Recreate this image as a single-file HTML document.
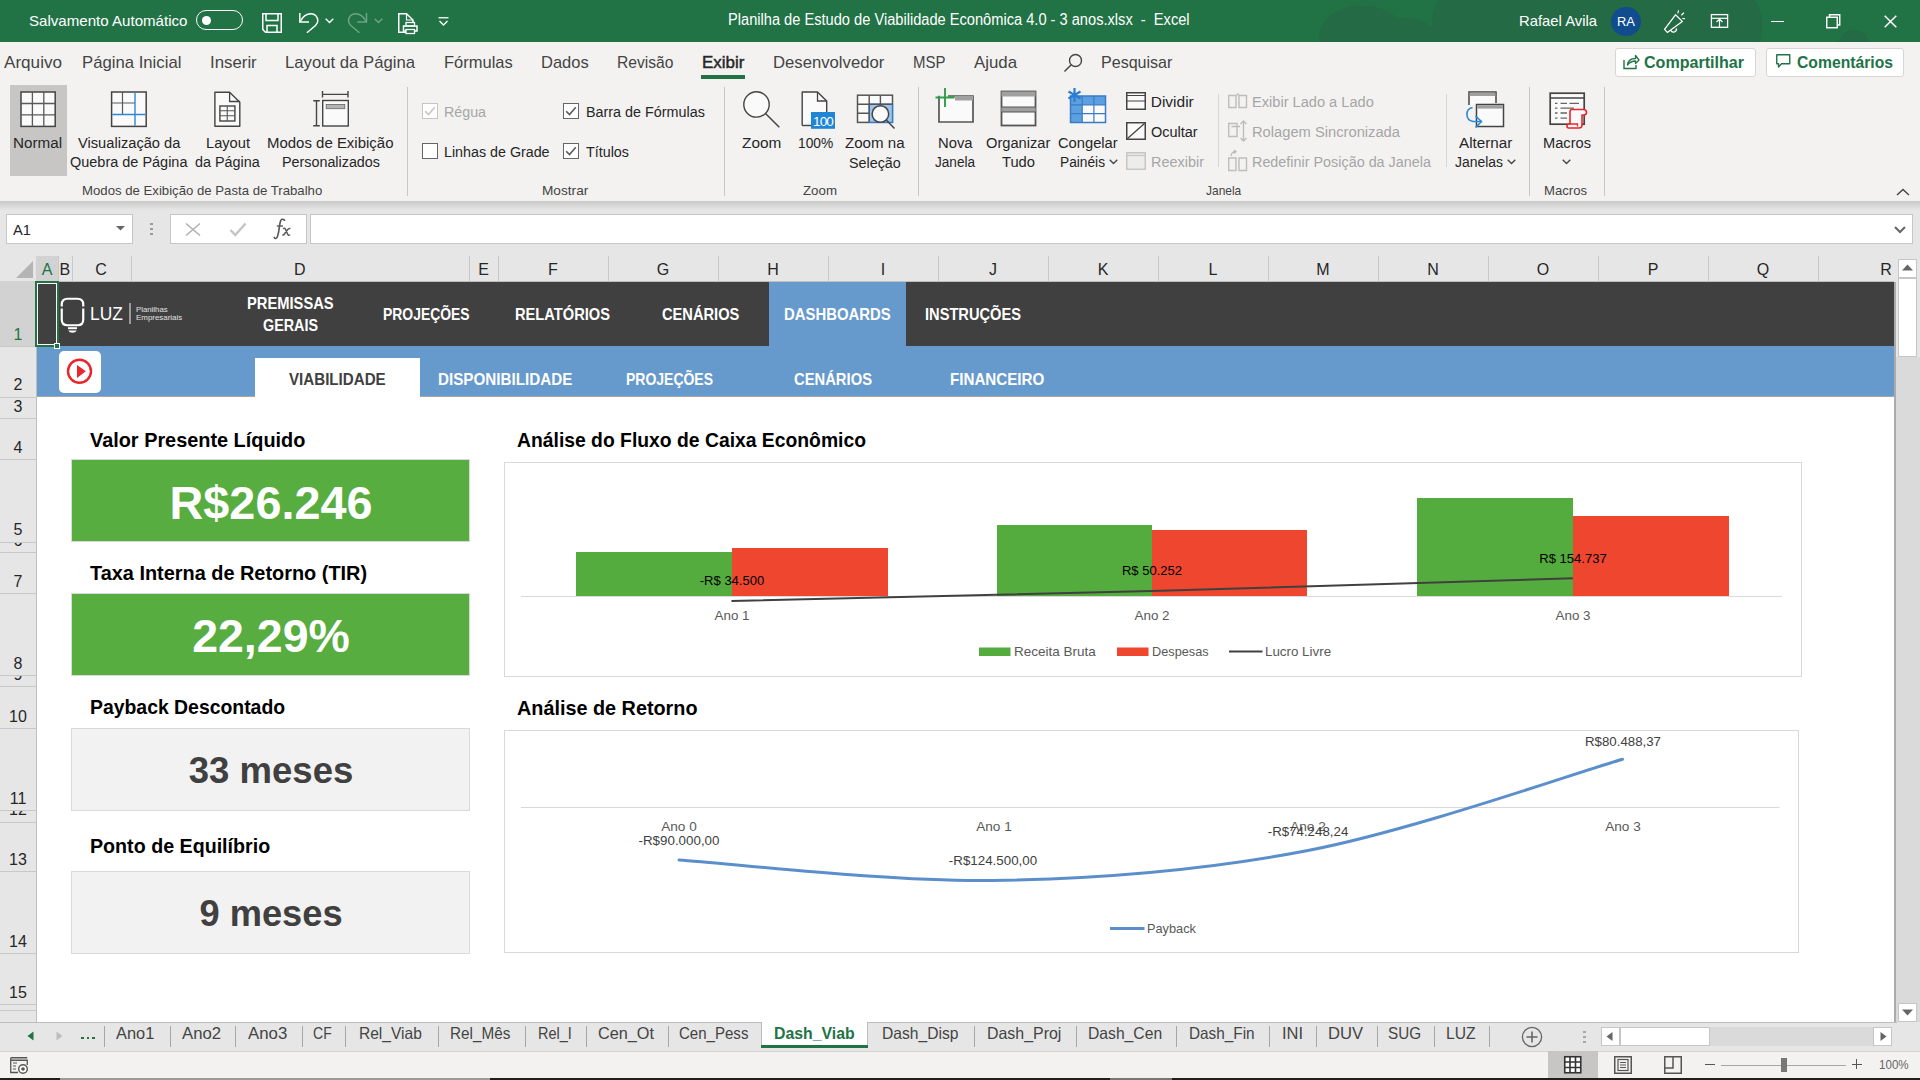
<!DOCTYPE html><html><head><meta charset="utf-8"><style>
*{margin:0;padding:0;box-sizing:border-box}
html,body{width:1920px;height:1080px;overflow:hidden;background:#fff;font-family:"Liberation Sans",sans-serif;position:relative}
.t{position:absolute;white-space:nowrap;line-height:1}
.r{position:absolute;display:block;overflow:visible}
</style></head><body>

<div class="r" style="left:0px;top:0px;width:1920px;height:42px;background:#217346;"></div>
<div class="r" style="left:0;top:0;width:1920px;height:42px;overflow:hidden"><div class="r" style="left:1319px;top:6px;width:86px;height:70px;border-radius:45%;background:#246a45"></div><div class="r" style="left:1370px;top:18px;width:70px;height:50px;border-radius:50%;background:#246a45"></div><div class="r" style="left:1432px;top:-10px;width:330px;height:70px;border-radius:30px;background:#246a45"></div><div class="r" style="left:1838px;top:30px;width:32px;height:30px;border-radius:50%;background:#246a45"></div></div>
<div class="t" style="left:28.50px;top:12.90px;font-size:15px;color:#fff;transform:scaleX(1.0057);transform-origin:0 0;">Salvamento Automático</div>
<div class="r" style="left:196px;top:10px;width:47px;height:20px;border:1.5px solid #fff;border-radius:10px"></div>
<div class="r" style="left:201.5px;top:15.5px;width:9px;height:9px;background:#fff;border-radius:50%"></div>
<svg class="r" style="left:262px;top:13px;" width="20" height="20" viewBox="0 0 20 20"><path d="M0.75 0.75H19.25V19.25H3.5L0.75 16.5Z M4 0.75V7.5H16V0.75 M5 19.25V12.5H15V19.25" fill="none" stroke="#fff" stroke-width="1.5"/></svg>
<svg class="r" style="left:298px;top:12px;" width="22" height="22" viewBox="0 0 22 22"><path d="M1.8 1.1V9.9H11" fill="none" stroke="#fff" stroke-width="1.5"/><path d="M2.5 9C5 4 8.5 1.7 13 1.7C17 1.7 19.8 5 19.8 8.8C19.8 10.5 19 12 17.5 13.5L8.9 20.8" fill="none" stroke="#fff" stroke-width="1.5"/></svg>
<svg class="r" style="left:325px;top:18px;" width="9" height="6" viewBox="0 0 9 6"><path d="M0.7 0.7L4.5 4.5L8.3 0.7" fill="none" stroke="#fff" stroke-width="1.4"/></svg>
<svg class="r" style="left:348px;top:12px;" width="22" height="22" viewBox="0 0 22 22"><path d="M18.5 1.1V9.9H9.3" fill="none" stroke="#6ea383" stroke-width="1.5"/><path d="M17.8 9C15.3 4 11.8 1.7 7.3 1.7C3.3 1.7 0.5 5 0.5 8.8C0.5 10.5 1.3 12 2.8 13.5L11.4 20.8" fill="none" stroke="#6ea383" stroke-width="1.5"/></svg>
<svg class="r" style="left:374px;top:18px;" width="9" height="6" viewBox="0 0 9 6"><path d="M0.7 0.7L4.5 4.5L8.3 0.7" fill="none" stroke="#6ea383" stroke-width="1.4"/></svg>
<svg class="r" style="left:398px;top:13px;" width="20" height="21" viewBox="0 0 20 21"><path d="M8 19.25H0.75V0.75H8.5L15 7V9" fill="none" stroke="#fff" stroke-width="1.5"/><path d="M8.5 0.75V7H15" fill="none" stroke="#fff" stroke-width="1.2"/><rect x="5.5" y="13" width="13.5" height="5" fill="none" stroke="#fff" stroke-width="1.5"/><rect x="8" y="9.5" width="8.5" height="3.5" fill="none" stroke="#fff" stroke-width="1.3"/><rect x="8" y="16.5" width="8.5" height="4" fill="#217346" stroke="#fff" stroke-width="1.3"/></svg>
<svg class="r" style="left:438px;top:17px;" width="11" height="10" viewBox="0 0 11 10"><path d="M0.5 0.75H10.5" stroke="#fff" stroke-width="1.3"/><path d="M1.5 4L5.5 8L9.5 4" fill="none" stroke="#fff" stroke-width="1.3"/></svg>
<div class="t" style="left:728.00px;top:11.86px;font-size:16px;color:#fff;transform:scaleX(0.9143);transform-origin:0 0;">Planilha de Estudo de Viabilidade Econômica 4.0 - 3 anos.xlsx&nbsp; -&nbsp; Excel</div>
<div class="t" style="left:1519.00px;top:13.30px;font-size:15px;color:#fff;transform:scaleX(0.9881);transform-origin:0 0;">Rafael Avila</div>
<div class="r" style="left:1611px;top:6.5px;width:29.5px;height:29.5px;border-radius:50%;background:#114d8e"></div>
<div class="t" style="left:1625.80px;top:15.84px;font-size:12px;color:#fff;transform:scaleX(1.0797) translateX(-50%);transform-origin:0 0;">RA</div>
<svg class="r" style="left:1660px;top:8px;" width="28" height="28" viewBox="0 0 28 28"><path d="M4.5 21.4L15.5 6.8L22.3 13.4L7.3 24.4Z" fill="none" stroke="#fff" stroke-width="1.3" stroke-linejoin="round"/><path d="M10.8 22.4A3 3 0 0 0 16.4 20.4" fill="none" stroke="#fff" stroke-width="1.3"/><path d="M17.8 5.3L18.6 2.3M21.3 7.3L24 4.8M22.3 10.5L25 10.7" stroke="#fff" stroke-width="1.2"/></svg>
<svg class="r" style="left:1710px;top:14px;" width="19" height="14" viewBox="0 0 19 14"><rect x="1.4" y="0.6" width="16.2" height="12.7" fill="none" stroke="#fff" stroke-width="1.3"/><path d="M1.4 4.3H17.6" stroke="#fff" stroke-width="1.2"/><path d="M9.5 13V5M6.5 8L9.5 5L12.5 8" fill="none" stroke="#fff" stroke-width="1.2"/></svg>
<div class="r" style="left:1771px;top:20.5px;width:13px;height:1.5px;background:#fff;"></div>
<svg class="r" style="left:1826px;top:14px;" width="15" height="15" viewBox="0 0 15 15"><rect x="0.75" y="3.25" width="10.5" height="10.5" fill="none" stroke="#fff" stroke-width="1.4"/><path d="M3.5 3V0.75H13.75V11H11.5" fill="none" stroke="#fff" stroke-width="1.4"/></svg>
<svg class="r" style="left:1884px;top:15px;" width="13" height="13" viewBox="0 0 13 13"><path d="M0.7 0.7L12.3 12.3M12.3 0.7L0.7 12.3" stroke="#fff" stroke-width="1.5"/></svg>
<div class="r" style="left:0px;top:42px;width:1920px;height:159px;background:#f3f2f1;"></div>
<div class="t" style="left:4.30px;top:54.11px;font-size:17px;color:#444444;transform:scaleX(1.0062);transform-origin:0 0;">Arquivo</div>
<div class="t" style="left:82.30px;top:54.11px;font-size:17px;color:#444444;transform:scaleX(0.9829);transform-origin:0 0;">Página Inicial</div>
<div class="t" style="left:210.00px;top:54.11px;font-size:17px;color:#444444;transform:scaleX(0.9890);transform-origin:0 0;">Inserir</div>
<div class="t" style="left:285.00px;top:54.11px;font-size:17px;color:#444444;transform:scaleX(0.9825);transform-origin:0 0;">Layout da Página</div>
<div class="t" style="left:444.00px;top:54.11px;font-size:17px;color:#444444;transform:scaleX(0.9697);transform-origin:0 0;">Fórmulas</div>
<div class="t" style="left:541.00px;top:54.11px;font-size:17px;color:#444444;transform:scaleX(0.9707);transform-origin:0 0;">Dados</div>
<div class="t" style="left:617.00px;top:54.11px;font-size:17px;color:#444444;transform:scaleX(0.9182);transform-origin:0 0;">Revisão</div>
<div class="t" style="left:772.50px;top:54.11px;font-size:17px;color:#444444;transform:scaleX(0.9816);transform-origin:0 0;">Desenvolvedor</div>
<div class="t" style="left:912.50px;top:54.11px;font-size:17px;color:#444444;transform:scaleX(0.8821);transform-origin:0 0;">MSP</div>
<div class="t" style="left:974.00px;top:54.11px;font-size:17px;color:#444444;transform:scaleX(0.9889);transform-origin:0 0;">Ajuda</div>
<div class="t" style="left:702.00px;top:54.11px;font-size:17px;color:#262626;transform:scaleX(0.9973);transform-origin:0 0;-webkit-text-stroke:0.45px #262626;">Exibir</div>
<div class="r" style="left:701px;top:75px;width:44px;height:4px;background:#217346;"></div>
<svg class="r" style="left:1063px;top:53px;" width="20" height="20" viewBox="0 0 20 20"><circle cx="12.5" cy="7.5" r="6" fill="none" stroke="#444" stroke-width="1.4"/><path d="M8.2 11.8L1.5 18.5" stroke="#444" stroke-width="1.5"/></svg>
<div class="t" style="left:1100.60px;top:54.11px;font-size:17px;color:#444444;transform:scaleX(0.9445);transform-origin:0 0;">Pesquisar</div>
<div class="r" style="left:1614.5px;top:47.5px;width:141px;height:29px;background:#fff;border:1px solid #d6d6d6;border-radius:3px"></div>
<svg class="r" style="left:1623px;top:53px;" width="17" height="17" viewBox="0 0 17 17"><path d="M1 7V15.5H13V12" fill="none" stroke="#217346" stroke-width="1.4"/><path d="M4.5 12C5 7.5 8 5.5 12.5 5.5V2.5L16 7L12.5 10.5V8C9 8 6.5 9.5 4.5 12Z" fill="none" stroke="#217346" stroke-width="1.3" stroke-linejoin="round"/></svg>
<div class="t" style="left:1644.00px;top:53.81px;font-size:17px;color:#217346;font-weight:bold;transform:scaleX(0.9453);transform-origin:0 0;">Compartilhar</div>
<div class="r" style="left:1766px;top:47.5px;width:138px;height:29px;background:#fff;border:1px solid #d6d6d6;border-radius:3px"></div>
<svg class="r" style="left:1776px;top:54px;" width="15" height="15" viewBox="0 0 15 15"><path d="M0.75 0.75H13.75V9.75H5.5L2.5 13V9.75H0.75Z" fill="none" stroke="#217346" stroke-width="1.4" stroke-linejoin="round"/></svg>
<div class="t" style="left:1796.70px;top:53.81px;font-size:17px;color:#217346;font-weight:bold;transform:scaleX(0.9239);transform-origin:0 0;">Comentários</div>
<div class="r" style="left:10px;top:85px;width:57px;height:91px;background:#c8c6c4;"></div>
<svg class="r" style="left:19px;top:90px;" width="38" height="38" viewBox="0 0 38 38"><rect x="2" y="2" width="34.2" height="34.4" fill="#fafafa" stroke="#444" stroke-width="1.5"/><path d="M13.4 2V36.4M24.8 2V36.4M2 13.5H36.2M2 24.9H36.2" stroke="#5a5a5a" stroke-width="1.3"/></svg>
<div class="t" style="left:13.00px;top:134.68px;font-size:15.5px;color:#262626;transform:scaleX(0.9812);transform-origin:0 0;">Normal</div>
<svg class="r" style="left:110px;top:90px;" width="38" height="38" viewBox="0 0 38 38"><rect x="1.6" y="2" width="34.6" height="34.4" fill="#fafafa" stroke="#444" stroke-width="1.5"/><path d="M12.5 2V24.5M1.6 13H25" stroke="#5a5a5a" stroke-width="1.2"/><path d="M2.3 24.5H35.5M25 2.7V35.7" stroke="#2b88d8" stroke-width="1.4"/></svg>
<div class="t" style="left:78.30px;top:134.68px;font-size:15.5px;color:#262626;transform:scaleX(0.9454);transform-origin:0 0;">Visualização da</div>
<div class="t" style="left:70.00px;top:154.38px;font-size:15.5px;color:#262626;transform:scaleX(0.9335);transform-origin:0 0;">Quebra de Página</div>
<svg class="r" style="left:210px;top:88px;" width="34" height="42" viewBox="0 0 34 42"><path d="M4.9 38.3V4.3H19.6L29.8 14.2V38.3Z" fill="#fafafa" stroke="#444" stroke-width="1.4" stroke-linejoin="round"/><path d="M19.6 4.3V13.5H29.8" fill="none" stroke="#444" stroke-width="1.3"/><rect x="9.9" y="18" width="15" height="15" fill="#fafafa" stroke="#444" stroke-width="1.4"/><path d="M9.9 22.7H24.9M9.9 27.7H24.9M17.25 18V33" stroke="#555" stroke-width="1.1"/></svg>
<div class="t" style="left:206.00px;top:134.68px;font-size:15.5px;color:#262626;transform:scaleX(0.9450);transform-origin:0 0;">Layout</div>
<div class="t" style="left:195.00px;top:154.38px;font-size:15.5px;color:#262626;transform:scaleX(0.9264);transform-origin:0 0;">da Página</div>
<svg class="r" style="left:310px;top:88px;" width="42" height="42" viewBox="0 0 42 42"><path d="M6.5 12.7V37.7M3.2 12.7H9.8M3.2 37.7H9.8" stroke="#444" stroke-width="1.4"/><path d="M12.5 3V9.5M38 3V9.5M12.5 6.4H38" stroke="#444" stroke-width="1.4"/><rect x="12.7" y="12.5" width="25.6" height="25.5" fill="#fafafa" stroke="#444" stroke-width="1.4"/><rect x="16.2" y="16.4" width="18.6" height="4.3" fill="#b4b4b4" stroke="#666" stroke-width="0.8"/></svg>
<div class="t" style="left:267.30px;top:134.68px;font-size:15.5px;color:#262626;transform:scaleX(0.9656);transform-origin:0 0;">Modos de Exibição</div>
<div class="t" style="left:282.00px;top:154.38px;font-size:15.5px;color:#262626;transform:scaleX(0.9245);transform-origin:0 0;">Personalizados</div>
<div class="t" style="left:82.30px;top:184.07px;font-size:13.5px;color:#444;transform:scaleX(0.9761);transform-origin:0 0;">Modos de Exibição de Pasta de Trabalho</div>
<div class="r" style="left:407px;top:86.5px;width:1px;height:109px;background:#c8c6c4;"></div>
<svg class="r" style="left:422px;top:102.8px;" width="16" height="16" viewBox="0 0 16 16"><rect x="0.5" y="0.5" width="15" height="15" fill="#fff" stroke="#c8c6c4" stroke-width="1"/><path d="M3.2 8.2L6.5 11.6L12.8 4.3" fill="none" stroke="#c8c6c4" stroke-width="1.6"/></svg>
<div class="t" style="left:444.00px;top:104.28px;font-size:15.5px;color:#a6a6a6;transform:scaleX(0.9193);transform-origin:0 0;">Régua</div>
<svg class="r" style="left:422px;top:142.8px;" width="16" height="16" viewBox="0 0 16 16"><rect x="0.5" y="0.5" width="15" height="15" fill="#fff" stroke="#666" stroke-width="1"/></svg>
<div class="t" style="left:444.00px;top:143.58px;font-size:15.5px;color:#262626;transform:scaleX(0.9210);transform-origin:0 0;">Linhas de Grade</div>
<svg class="r" style="left:563px;top:102.8px;" width="16" height="16" viewBox="0 0 16 16"><rect x="0.5" y="0.5" width="15" height="15" fill="#fff" stroke="#666" stroke-width="1"/><path d="M3.2 8.2L6.5 11.6L12.8 4.3" fill="none" stroke="#5a5a5a" stroke-width="1.6"/></svg>
<div class="t" style="left:586.00px;top:104.28px;font-size:15.5px;color:#262626;transform:scaleX(0.9262);transform-origin:0 0;">Barra de Fórmulas</div>
<svg class="r" style="left:563px;top:142.8px;" width="16" height="16" viewBox="0 0 16 16"><rect x="0.5" y="0.5" width="15" height="15" fill="#fff" stroke="#666" stroke-width="1"/><path d="M3.2 8.2L6.5 11.6L12.8 4.3" fill="none" stroke="#5a5a5a" stroke-width="1.6"/></svg>
<div class="t" style="left:586.00px;top:143.58px;font-size:15.5px;color:#262626;transform:scaleX(0.9241);transform-origin:0 0;">Títulos</div>
<div class="t" style="left:541.50px;top:184.07px;font-size:13.5px;color:#444;transform:scaleX(1.0113);transform-origin:0 0;">Mostrar</div>
<div class="r" style="left:724px;top:86.5px;width:1px;height:109px;background:#c8c6c4;"></div>
<svg class="r" style="left:740px;top:88px;" width="44" height="44" viewBox="0 0 44 44"><circle cx="16.5" cy="16.4" r="12.7" fill="#fafafa" stroke="#444" stroke-width="1.4"/><path d="M25.5 25.5L39.3 39.3" stroke="#444" stroke-width="1.5"/></svg>
<div class="t" style="left:741.50px;top:134.68px;font-size:15.5px;color:#262626;transform:scaleX(0.9918);transform-origin:0 0;">Zoom</div>
<svg class="r" style="left:800px;top:90px;" width="38" height="40" viewBox="0 0 38 40"><path d="M2.2 35.5V2H17.5L26.7 11V22" fill="#fafafa" stroke="#444" stroke-width="1.4" stroke-linejoin="round"/><path d="M2.2 35.5H11" fill="none" stroke="#444" stroke-width="1.4"/><path d="M17.5 2V11H26.7" fill="none" stroke="#444" stroke-width="1.3"/><rect x="11" y="22" width="24" height="16.8" fill="#2185d5"/><text x="23" y="35.8" font-family="Liberation Sans" font-size="13.5" fill="#fff" text-anchor="middle" letter-spacing="-0.9" transform="scale(1,1)">100</text></svg>
<div class="t" style="left:797.60px;top:134.68px;font-size:15.5px;color:#262626;transform:scaleX(0.8876);transform-origin:0 0;">100%</div>
<svg class="r" style="left:856px;top:93px;" width="42" height="38" viewBox="0 0 42 38"><rect x="1.5" y="2.2" width="35" height="27.2" fill="#fafafa" stroke="#555" stroke-width="1.5"/><rect x="13.2" y="11.2" width="23.3" height="18.2" fill="#9cc3e8" stroke="#2b7cd3" stroke-width="1.3"/><path d="M13.2 2.2V29.4M24.4 2.2V11.2M1.5 11.2H36.5M1.5 20.2H13.2" stroke="#555" stroke-width="1.4"/><circle cx="24.4" cy="21" r="8.3" fill="#fafafa" stroke="#444" stroke-width="1.5"/><path d="M30.3 27L38.5 35.5" stroke="#444" stroke-width="1.5"/></svg>
<div class="t" style="left:845.00px;top:134.68px;font-size:15.5px;color:#262626;transform:scaleX(0.9741);transform-origin:0 0;">Zoom na</div>
<div class="t" style="left:849.00px;top:154.88px;font-size:15.5px;color:#262626;transform:scaleX(0.9245);transform-origin:0 0;">Seleção</div>
<div class="t" style="left:803.00px;top:184.07px;font-size:13.5px;color:#444;transform:scaleX(0.9846);transform-origin:0 0;">Zoom</div>
<div class="r" style="left:918px;top:86.5px;width:1px;height:109px;background:#c8c6c4;"></div>
<svg class="r" style="left:930px;top:86px;" width="46" height="40" viewBox="0 0 46 40"><path d="M9 9.8V36H43V10H18" fill="#fafafa" stroke="#555" stroke-width="1.7"/><rect x="25" y="10" width="18" height="4.5" fill="#a0a0a0"/><path d="M15 2V21M5.5 11.5H24.5" stroke="#2e9e4a" stroke-width="1.9"/></svg>
<div class="t" style="left:938.00px;top:134.68px;font-size:15.5px;color:#262626;transform:scaleX(0.9534);transform-origin:0 0;">Nova</div>
<div class="t" style="left:935.00px;top:154.38px;font-size:15.5px;color:#262626;transform:scaleX(0.8755);transform-origin:0 0;">Janela</div>
<svg class="r" style="left:1000px;top:90px;" width="38" height="38" viewBox="0 0 38 38"><rect x="1.5" y="1.5" width="34" height="34" fill="#fafafa" stroke="#555" stroke-width="1.8"/><rect x="1.5" y="1.5" width="34" height="5" fill="#a0a0a0"/><rect x="1.5" y="17" width="34" height="5" fill="#a0a0a0"/><path d="M1.5 17H35.5M1.5 22H35.5" stroke="#555" stroke-width="1.2"/></svg>
<div class="t" style="left:986.00px;top:134.68px;font-size:15.5px;color:#262626;transform:scaleX(0.9462);transform-origin:0 0;">Organizar</div>
<div class="t" style="left:1002.00px;top:154.38px;font-size:15.5px;color:#262626;transform:scaleX(0.9492);transform-origin:0 0;">Tudo</div>
<svg class="r" style="left:1066px;top:87px;" width="42" height="38" viewBox="0 0 42 38"><rect x="4.5" y="9" width="35" height="26.5" fill="#fafafa"/><rect x="4.5" y="9" width="35" height="8.8" fill="#5ca0e0"/><rect x="4.5" y="9" width="11.7" height="26.5" fill="#5ca0e0"/><path d="M4.5 17.8H39.5M4.5 26.6H39.5M16.2 9V35.5M27.9 9V35.5" stroke="#3a7bc8" stroke-width="1.2"/><rect x="4.5" y="9" width="35" height="26.5" fill="none" stroke="#3a7bc8" stroke-width="1.5"/><path d="M8.5 1V15M2.5 4.5L14.5 11.5M2.5 11.5L14.5 4.5" stroke="#2b7cd3" stroke-width="2.2"/></svg>
<div class="t" style="left:1058.00px;top:134.68px;font-size:15.5px;color:#262626;transform:scaleX(0.9490);transform-origin:0 0;">Congelar</div>
<div class="t" style="left:1059.60px;top:154.38px;font-size:15.5px;color:#262626;transform:scaleX(0.8851);transform-origin:0 0;">Painéis</div>
<svg class="r" style="left:1109px;top:159px;" width="9" height="6" viewBox="0 0 9 6"><path d="M0.7 0.7L4.5 4.5L8.3 0.7" fill="none" stroke="#444" stroke-width="1.3"/></svg>
<svg class="r" style="left:1126px;top:92px;" width="20" height="18" viewBox="0 0 20 18"><rect x="0.75" y="0.75" width="18.5" height="16.5" fill="#fafafa" stroke="#444" stroke-width="1.5"/><path d="M0.75 3.5H19.25M0.75 9H19.25" stroke="#444" stroke-width="1.2"/></svg>
<div class="t" style="left:1150.70px;top:94.08px;font-size:15.5px;color:#262626;">Dividir</div>
<svg class="r" style="left:1126px;top:122px;" width="20" height="18" viewBox="0 0 20 18"><rect x="0.75" y="0.75" width="18.5" height="16.5" fill="#fafafa" stroke="#444" stroke-width="1.5"/><path d="M1.5 16.5L18.5 1.5" stroke="#444" stroke-width="1.3"/></svg>
<div class="t" style="left:1150.70px;top:124.18px;font-size:15.5px;color:#262626;transform:scaleX(0.9346);transform-origin:0 0;">Ocultar</div>
<svg class="r" style="left:1126px;top:152px;" width="20" height="18" viewBox="0 0 20 18"><rect x="0.75" y="0.75" width="18.5" height="16.5" fill="#ececec" stroke="#c8c6c4" stroke-width="1.5"/><path d="M0.75 3.5H19.25" stroke="#c8c6c4" stroke-width="1.2"/></svg>
<div class="t" style="left:1150.70px;top:154.28px;font-size:15.5px;color:#a6a6a6;transform:scaleX(0.9324);transform-origin:0 0;">Reexibir</div>
<div class="r" style="left:1218px;top:94px;width:1px;height:73px;background:#d8d6d4;"></div>
<svg class="r" style="left:1228px;top:93px;" width="20" height="16" viewBox="0 0 20 16"><path d="M0.75 2.5H8V14.5H0.75Z M11 2.5H18.5V14.5H11Z M8 2.5L10 0.75 M11 2.5L10 0.75" fill="none" stroke="#bdbdbd" stroke-width="1.4"/></svg>
<div class="t" style="left:1252.40px;top:94.08px;font-size:15.5px;color:#a6a6a6;transform:scaleX(0.9419);transform-origin:0 0;">Exibir Lado a Lado</div>
<svg class="r" style="left:1228px;top:120px;" width="20" height="22" viewBox="0 0 20 22"><path d="M0.75 3.5H9V16.5H0.75Z M3.5 6.5H12" fill="none" stroke="#bdbdbd" stroke-width="1.4"/><path d="M15.5 1V21M12.5 4L15.5 1L18.5 4M12.5 18L15.5 21L18.5 18" fill="none" stroke="#bdbdbd" stroke-width="1.4"/></svg>
<div class="t" style="left:1252.40px;top:124.18px;font-size:15.5px;color:#a6a6a6;transform:scaleX(0.9489);transform-origin:0 0;">Rolagem Sincronizada</div>
<svg class="r" style="left:1228px;top:150px;" width="20" height="22" viewBox="0 0 20 22"><path d="M0.75 8H8V20.5H0.75Z M11 8H18.5V20.5H11Z" fill="none" stroke="#bdbdbd" stroke-width="1.4"/><path d="M3 6C3 3 5 1.5 8 1.5M6 0L8 1.5L6 3.5" fill="none" stroke="#bdbdbd" stroke-width="1.3"/></svg>
<div class="t" style="left:1252.40px;top:154.28px;font-size:15.5px;color:#a6a6a6;transform:scaleX(0.9272);transform-origin:0 0;">Redefinir Posição da Janela</div>
<div class="t" style="left:1205.70px;top:184.07px;font-size:13.5px;color:#444;transform:scaleX(0.8867);transform-origin:0 0;">Janela</div>
<div class="r" style="left:1446px;top:94px;width:1px;height:73px;background:#d8d6d4;"></div>
<svg class="r" style="left:1460px;top:88px;" width="48" height="44" viewBox="0 0 48 44"><path d="M9 17V4H36V15" fill="#fafafa" stroke="#444" stroke-width="1.5"/><rect x="9.6" y="4.6" width="25.8" height="3.4" fill="#a0a0a0"/><rect x="16.5" y="16.5" width="27" height="22" fill="#fafafa" stroke="#444" stroke-width="1.5"/><rect x="17.2" y="17.2" width="25.6" height="3.4" fill="#a0a0a0"/><path d="M12.5 19.5C5 21 5 32 13 33.5H21.5" fill="none" stroke="#2b88d8" stroke-width="1.6"/><path d="M15.5 28L21.5 33.5L15.5 39.5" fill="none" stroke="#2b88d8" stroke-width="1.6"/></svg>
<div class="t" style="left:1459.00px;top:134.68px;font-size:15.5px;color:#262626;transform:scaleX(0.9819);transform-origin:0 0;">Alternar</div>
<div class="t" style="left:1455.00px;top:154.38px;font-size:15.5px;color:#262626;transform:scaleX(0.8982);transform-origin:0 0;">Janelas</div>
<svg class="r" style="left:1507px;top:159px;" width="9" height="6" viewBox="0 0 9 6"><path d="M0.7 0.7L4.5 4.5L8.3 0.7" fill="none" stroke="#444" stroke-width="1.3"/></svg>
<div class="r" style="left:1529px;top:86.5px;width:1px;height:109px;background:#c8c6c4;"></div>
<svg class="r" style="left:1546px;top:90px;" width="44" height="42" viewBox="0 0 44 42"><rect x="4.2" y="3.2" width="34" height="31" fill="#fafafa" stroke="#444" stroke-width="1.7"/><path d="M4.2 8H38.2" stroke="#444" stroke-width="1.5"/><path d="M9 13.3H11.5M14.5 13.3H21M23.5 13.3H33M9 18.2H11.5M14.5 18.2H28M9 23H11.5M14.5 23H21M9 28.2H11.5M14.5 28.2H21" stroke="#666" stroke-width="1.3"/><path d="M25 19.5H37.5C39.5 19.5 40.5 20.5 40.5 22.5C40.5 24.5 39.5 25 37.5 25H36V35C36 37 35 38 33 38H22.5C21.5 38 21 37 21 36C21 35 21.5 34 22.5 34H24V22.5C24 20.5 24.5 19.5 25.5 19.5Z" fill="#fafafa" stroke="#e8262b" stroke-width="1.6" stroke-linejoin="round"/><path d="M22.5 34H31.5V36.5" fill="none" stroke="#e8262b" stroke-width="1.3"/></svg>
<div class="t" style="left:1543.00px;top:134.68px;font-size:15.5px;color:#262626;transform:scaleX(0.9446);transform-origin:0 0;">Macros</div>
<svg class="r" style="left:1562px;top:159px;" width="9" height="6" viewBox="0 0 9 6"><path d="M0.7 0.7L4.5 4.5L8.3 0.7" fill="none" stroke="#444" stroke-width="1.3"/></svg>
<div class="t" style="left:1544.00px;top:184.07px;font-size:13.5px;color:#444;transform:scaleX(0.9711);transform-origin:0 0;">Macros</div>
<div class="r" style="left:1604px;top:86.5px;width:1px;height:109px;background:#c8c6c4;"></div>
<svg class="r" style="left:1896px;top:188px;" width="14" height="8" viewBox="0 0 14 8"><path d="M1 7L7 1.5L13 7" fill="none" stroke="#444" stroke-width="1.4"/></svg>
<div class="r" style="left:0px;top:201px;width:1920px;height:55px;background:#e6e6e6;"></div>
<div class="r" style="left:0;top:201px;width:1920px;height:9px;background:linear-gradient(#c9c9c9,#e6e6e6)"></div>
<div class="r" style="left:6px;top:214px;width:127px;height:30px;background:#fff;border:1px solid #c6c6c6"></div>
<div class="t" style="left:13.30px;top:222.00px;font-size:15px;color:#262626;transform:scaleX(0.9813);transform-origin:0 0;">A1</div>
<svg class="r" style="left:116px;top:226px;" width="9" height="5" viewBox="0 0 9 5"><path d="M0 0H9L4.5 4.5Z" fill="#666"/></svg>
<div class="r" style="left:150px;top:222.5px;width:2.5px;height:2.5px;background:#9a9a9a;"></div>
<div class="r" style="left:150px;top:227.5px;width:2.5px;height:2.5px;background:#9a9a9a;"></div>
<div class="r" style="left:150px;top:232.5px;width:2.5px;height:2.5px;background:#9a9a9a;"></div>
<div class="r" style="left:170px;top:214px;width:137px;height:30px;background:#fff;border:1px solid #c6c6c6"></div>
<svg class="r" style="left:185px;top:223px;" width="16" height="13" viewBox="0 0 16 13"><path d="M1 0.5L15 12.5M15 0.5L1 12.5" stroke="#b0b0b0" stroke-width="1.6"/></svg>
<svg class="r" style="left:229px;top:222px;" width="18" height="15" viewBox="0 0 18 15"><path d="M1.5 8L6.3 13L16.5 1.5" fill="none" stroke="#c4c4c4" stroke-width="2.4"/></svg>
<svg class="r" style="left:272px;top:217px;" width="22" height="24" viewBox="0 0 22 24"><path d="M12.5 3.2C11.5 1.8 9.5 2 8.7 3.6C8 5 7.6 8 7 12.5C6.3 17.5 5.5 20 4.6 21C3.8 21.8 2.6 21.6 2.2 20.5" fill="none" stroke="#5a5a5a" stroke-width="1.7" stroke-linecap="round"/><path d="M4.8 9H11" stroke="#5a5a5a" stroke-width="1.4"/><path d="M11.5 11.5C12.5 11 13.2 11.3 13.6 12.5L15.8 17.5C16.2 18.4 16.8 18.6 17.6 18M17.8 11.5C17 11.2 16.3 11.8 15.5 12.8L12.8 16.5C12.2 17.4 11.5 18.2 10.8 18" fill="none" stroke="#5a5a5a" stroke-width="1.5" stroke-linecap="round"/></svg>
<div class="r" style="left:310px;top:214px;width:1603px;height:30px;background:#fff;border:1px solid #c6c6c6"></div>
<svg class="r" style="left:1894px;top:226px;" width="12" height="8" viewBox="0 0 12 8"><path d="M1 1L6 6L11 1" fill="none" stroke="#666" stroke-width="2"/></svg>
<div class="r" style="left:0px;top:256px;width:1897px;height:25px;background:#e6e6e6;"></div>
<svg class="r" style="left:15px;top:260px;" width="19" height="19" viewBox="0 0 19 19"><path d="M18 1V18H1Z" fill="#b4b4b4"/></svg>
<div class="r" style="left:36px;top:256px;width:22px;height:25px;background:#d2d2d2;"></div>
<div class="t" style="left:47.00px;top:261.76px;font-size:16px;color:#217346;transform:scaleX(1.0000) translateX(-50%);transform-origin:0 0;">A</div>
<div class="r" style="left:58px;top:256px;width:1px;height:25px;background:#c8c8c8;"></div>
<div class="t" style="left:64.85px;top:261.76px;font-size:16px;color:#262626;transform:scaleX(1.0000) translateX(-50%);transform-origin:0 0;">B</div>
<div class="r" style="left:71.7px;top:256px;width:1px;height:25px;background:#c8c8c8;"></div>
<div class="t" style="left:101.10px;top:261.76px;font-size:16px;color:#262626;transform:scaleX(1.0000) translateX(-50%);transform-origin:0 0;">C</div>
<div class="r" style="left:130.5px;top:256px;width:1px;height:25px;background:#c8c8c8;"></div>
<div class="t" style="left:299.75px;top:261.76px;font-size:16px;color:#262626;transform:scaleX(1.0000) translateX(-50%);transform-origin:0 0;">D</div>
<div class="r" style="left:469px;top:256px;width:1px;height:25px;background:#c8c8c8;"></div>
<div class="t" style="left:483.50px;top:261.76px;font-size:16px;color:#262626;transform:scaleX(1.0000) translateX(-50%);transform-origin:0 0;">E</div>
<div class="r" style="left:498px;top:256px;width:1px;height:25px;background:#c8c8c8;"></div>
<div class="t" style="left:553.00px;top:261.76px;font-size:16px;color:#262626;transform:scaleX(1.0000) translateX(-50%);transform-origin:0 0;">F</div>
<div class="r" style="left:608px;top:256px;width:1px;height:25px;background:#c8c8c8;"></div>
<div class="t" style="left:663.00px;top:261.76px;font-size:16px;color:#262626;transform:scaleX(1.0000) translateX(-50%);transform-origin:0 0;">G</div>
<div class="r" style="left:718px;top:256px;width:1px;height:25px;background:#c8c8c8;"></div>
<div class="t" style="left:773.00px;top:261.76px;font-size:16px;color:#262626;transform:scaleX(1.0000) translateX(-50%);transform-origin:0 0;">H</div>
<div class="r" style="left:828px;top:256px;width:1px;height:25px;background:#c8c8c8;"></div>
<div class="t" style="left:883.00px;top:261.76px;font-size:16px;color:#262626;transform:scaleX(1.0000) translateX(-50%);transform-origin:0 0;">I</div>
<div class="r" style="left:938px;top:256px;width:1px;height:25px;background:#c8c8c8;"></div>
<div class="t" style="left:993.00px;top:261.76px;font-size:16px;color:#262626;transform:scaleX(1.0000) translateX(-50%);transform-origin:0 0;">J</div>
<div class="r" style="left:1048px;top:256px;width:1px;height:25px;background:#c8c8c8;"></div>
<div class="t" style="left:1103.00px;top:261.76px;font-size:16px;color:#262626;transform:scaleX(1.0000) translateX(-50%);transform-origin:0 0;">K</div>
<div class="r" style="left:1158px;top:256px;width:1px;height:25px;background:#c8c8c8;"></div>
<div class="t" style="left:1213.00px;top:261.76px;font-size:16px;color:#262626;transform:scaleX(1.0000) translateX(-50%);transform-origin:0 0;">L</div>
<div class="r" style="left:1268px;top:256px;width:1px;height:25px;background:#c8c8c8;"></div>
<div class="t" style="left:1323.00px;top:261.76px;font-size:16px;color:#262626;transform:scaleX(1.0000) translateX(-50%);transform-origin:0 0;">M</div>
<div class="r" style="left:1378px;top:256px;width:1px;height:25px;background:#c8c8c8;"></div>
<div class="t" style="left:1433.00px;top:261.76px;font-size:16px;color:#262626;transform:scaleX(1.0000) translateX(-50%);transform-origin:0 0;">N</div>
<div class="r" style="left:1488px;top:256px;width:1px;height:25px;background:#c8c8c8;"></div>
<div class="t" style="left:1543.00px;top:261.76px;font-size:16px;color:#262626;transform:scaleX(1.0000) translateX(-50%);transform-origin:0 0;">O</div>
<div class="r" style="left:1598px;top:256px;width:1px;height:25px;background:#c8c8c8;"></div>
<div class="t" style="left:1653.00px;top:261.76px;font-size:16px;color:#262626;transform:scaleX(1.0000) translateX(-50%);transform-origin:0 0;">P</div>
<div class="r" style="left:1708px;top:256px;width:1px;height:25px;background:#c8c8c8;"></div>
<div class="t" style="left:1763.00px;top:261.76px;font-size:16px;color:#262626;transform:scaleX(1.0000) translateX(-50%);transform-origin:0 0;">Q</div>
<div class="r" style="left:1818px;top:256px;width:1px;height:25px;background:#c8c8c8;"></div>
<div class="t" style="left:1886.00px;top:261.76px;font-size:16px;color:#262626;transform:scaleX(1.0000) translateX(-50%);transform-origin:0 0;">R</div>
<div class="r" style="left:0px;top:281px;width:1897px;height:1px;background:#bfbfbf;"></div>
<div class="r" style="left:0px;top:281px;width:36px;height:741px;background:#e6e6e6;"></div>
<div class="r" style="left:36px;top:281px;width:1px;height:741px;background:#bfbfbf;"></div>
<div class="r" style="left:0px;top:281px;width:36px;height:65px;background:#d2d2d2;"></div>
<div class="r" style="left:0px;top:346px;width:36px;height:1px;background:#c8c8c8;"></div>
<div class="r" style="left:0;top:282px;width:36px;height:64px;overflow:hidden">
<div class="t" style="left:0;width:36px;text-align:center;top:44.96px;font-size:16px;color:#217346">1</div>
</div>
<div class="r" style="left:0px;top:396.5px;width:36px;height:1px;background:#c8c8c8;"></div>
<div class="r" style="left:0;top:347px;width:36px;height:49.5px;overflow:hidden">
<div class="t" style="left:0;width:36px;text-align:center;top:30.46px;font-size:16px;color:#262626">2</div>
</div>
<div class="r" style="left:0px;top:418px;width:36px;height:1px;background:#c8c8c8;"></div>
<div class="r" style="left:0;top:397.5px;width:36px;height:20.5px;overflow:hidden">
<div class="t" style="left:0;width:36px;text-align:center;top:1.46px;font-size:16px;color:#262626">3</div>
</div>
<div class="r" style="left:0px;top:459px;width:36px;height:1px;background:#c8c8c8;"></div>
<div class="r" style="left:0;top:419px;width:36px;height:40px;overflow:hidden">
<div class="t" style="left:0;width:36px;text-align:center;top:20.96px;font-size:16px;color:#262626">4</div>
</div>
<div class="r" style="left:0px;top:541.5px;width:36px;height:1px;background:#c8c8c8;"></div>
<div class="r" style="left:0;top:460px;width:36px;height:81.5px;overflow:hidden">
<div class="t" style="left:0;width:36px;text-align:center;top:62.46px;font-size:16px;color:#262626">5</div>
</div>
<div class="r" style="left:0px;top:552px;width:36px;height:1px;background:#c8c8c8;"></div>
<div class="r" style="left:0;top:542.5px;width:36px;height:9.5px;overflow:hidden">
<div class="t" style="left:0;width:36px;text-align:center;top:-9.54px;font-size:16px;color:#262626">6</div>
</div>
<div class="r" style="left:0px;top:593px;width:36px;height:1px;background:#c8c8c8;"></div>
<div class="r" style="left:0;top:553px;width:36px;height:40px;overflow:hidden">
<div class="t" style="left:0;width:36px;text-align:center;top:20.96px;font-size:16px;color:#262626">7</div>
</div>
<div class="r" style="left:0px;top:675px;width:36px;height:1px;background:#c8c8c8;"></div>
<div class="r" style="left:0;top:594px;width:36px;height:81px;overflow:hidden">
<div class="t" style="left:0;width:36px;text-align:center;top:61.96px;font-size:16px;color:#262626">8</div>
</div>
<div class="r" style="left:0px;top:686px;width:36px;height:1px;background:#c8c8c8;"></div>
<div class="r" style="left:0;top:676px;width:36px;height:10px;overflow:hidden">
<div class="t" style="left:0;width:36px;text-align:center;top:-9.04px;font-size:16px;color:#262626">9</div>
</div>
<div class="r" style="left:0px;top:728px;width:36px;height:1px;background:#c8c8c8;"></div>
<div class="r" style="left:0;top:687px;width:36px;height:41px;overflow:hidden">
<div class="t" style="left:0;width:36px;text-align:center;top:21.96px;font-size:16px;color:#262626">10</div>
</div>
<div class="r" style="left:0px;top:810px;width:36px;height:1px;background:#c8c8c8;"></div>
<div class="r" style="left:0;top:729px;width:36px;height:81px;overflow:hidden">
<div class="t" style="left:0;width:36px;text-align:center;top:61.96px;font-size:16px;color:#262626">11</div>
</div>
<div class="r" style="left:0px;top:821.5px;width:36px;height:1px;background:#c8c8c8;"></div>
<div class="r" style="left:0;top:811px;width:36px;height:10.5px;overflow:hidden">
<div class="t" style="left:0;width:36px;text-align:center;top:-8.54px;font-size:16px;color:#262626">12</div>
</div>
<div class="r" style="left:0px;top:871px;width:36px;height:1px;background:#c8c8c8;"></div>
<div class="r" style="left:0;top:822.5px;width:36px;height:48.5px;overflow:hidden">
<div class="t" style="left:0;width:36px;text-align:center;top:29.46px;font-size:16px;color:#262626">13</div>
</div>
<div class="r" style="left:0px;top:953px;width:36px;height:1px;background:#c8c8c8;"></div>
<div class="r" style="left:0;top:872px;width:36px;height:81px;overflow:hidden">
<div class="t" style="left:0;width:36px;text-align:center;top:61.96px;font-size:16px;color:#262626">14</div>
</div>
<div class="r" style="left:0px;top:1022px;width:36px;height:1px;background:#c8c8c8;"></div>
<div class="r" style="left:0;top:954px;width:36px;height:68px;overflow:hidden">
<div class="t" style="left:0;width:36px;text-align:center;top:30.96px;font-size:16px;color:#262626">15</div>
</div>
<div class="r" style="left:0px;top:1004px;width:36px;height:1px;background:#c8c8c8;"></div>
<div class="r" style="left:0px;top:1010px;width:36px;height:1px;background:#c8c8c8;"></div>
<div class="r" style="left:37px;top:282px;width:1857px;height:64px;background:#404040;"></div>
<div class="r" style="left:769px;top:282px;width:137px;height:64px;background:#6699cc;"></div>
<div class="r" style="left:37px;top:346px;width:1857px;height:50.5px;background:#6699cc;"></div>
<div class="r" style="left:37px;top:396px;width:1857px;height:1px;background:#a6a6a6;"></div>
<div class="r" style="left:255px;top:358px;width:165px;height:38.5px;background:#ffffff;"></div>
<svg class="r" style="left:58px;top:296px;" width="30" height="40" viewBox="0 0 30 40"><path d="M3.75 10.5V8.5C3.75 5 6 2.75 9.5 2.75H19.5C23 2.75 25.25 5 25.25 8.5V10.5 M3.75 12.5V23.5C3.75 27 6 29.25 9.5 29.25H19.5C23 29.25 25.25 27 25.25 23.5V12.5" fill="none" stroke="#fff" stroke-width="2.2"/><rect x="10" y="31.2" width="9" height="2" fill="#fff"/><path d="M10.5 34.5H18.5C18 36 16.5 36.7 14.5 36.7C12.5 36.7 11 36 10.5 34.5Z" fill="#fff"/></svg>
<div class="t" style="left:90.40px;top:304.42px;font-size:19px;color:#fff;transform:scaleX(0.9139);transform-origin:0 0;">LUZ</div>
<div class="r" style="left:129px;top:303px;width:2px;height:21px;background:#9a9a9a;"></div>
<div class="t" style="left:136.00px;top:306.03px;font-size:8px;color:#e0e0e0;transform:scaleX(0.9754);transform-origin:0 0;">Planilhas</div>
<div class="t" style="left:136.00px;top:313.83px;font-size:8px;color:#e0e0e0;transform:scaleX(0.9907);transform-origin:0 0;">Empresariais</div>
<div class="t" style="left:246.70px;top:294.63px;font-size:16.5px;color:#fff;font-weight:bold;transform:scaleX(0.8912);transform-origin:0 0;">PREMISSAS</div>
<div class="t" style="left:262.70px;top:317.33px;font-size:16.5px;color:#fff;font-weight:bold;transform:scaleX(0.8696);transform-origin:0 0;">GERAIS</div>
<div class="t" style="left:382.70px;top:305.63px;font-size:16.5px;color:#fff;font-weight:bold;transform:scaleX(0.8435);transform-origin:0 0;">PROJEÇÕES</div>
<div class="t" style="left:515.00px;top:305.63px;font-size:16.5px;color:#fff;font-weight:bold;transform:scaleX(0.8884);transform-origin:0 0;">RELATÓRIOS</div>
<div class="t" style="left:661.70px;top:305.63px;font-size:16.5px;color:#fff;font-weight:bold;transform:scaleX(0.8875);transform-origin:0 0;">CENÁRIOS</div>
<div class="t" style="left:784.00px;top:305.63px;font-size:16.5px;color:#fff;font-weight:bold;transform:scaleX(0.9021);transform-origin:0 0;">DASHBOARDS</div>
<div class="t" style="left:925.00px;top:305.63px;font-size:16.5px;color:#fff;font-weight:bold;transform:scaleX(0.8875);transform-origin:0 0;">INSTRUÇÕES</div>
<div class="t" style="left:289.00px;top:371.03px;font-size:16.5px;color:#404040;font-weight:bold;transform:scaleX(0.9173);transform-origin:0 0;">VIABILIDADE</div>
<div class="t" style="left:437.70px;top:371.03px;font-size:16.5px;color:#fff;font-weight:bold;transform:scaleX(0.9214);transform-origin:0 0;">DISPONIBILIDADE</div>
<div class="t" style="left:626.00px;top:371.03px;font-size:16.5px;color:#fff;font-weight:bold;transform:scaleX(0.8474);transform-origin:0 0;">PROJEÇÕES</div>
<div class="t" style="left:794.30px;top:371.03px;font-size:16.5px;color:#fff;font-weight:bold;transform:scaleX(0.8956);transform-origin:0 0;">CENÁRIOS</div>
<div class="t" style="left:950.00px;top:371.03px;font-size:16.5px;color:#fff;font-weight:bold;transform:scaleX(0.9185);transform-origin:0 0;">FINANCEIRO</div>
<div class="r" style="left:58.5px;top:350.5px;width:42px;height:42px;background:#fff;border-radius:5px"></div>
<svg class="r" style="left:66px;top:358px;" width="28" height="28" viewBox="0 0 28 28"><circle cx="13.5" cy="13.3" r="11.5" fill="none" stroke="#e8262b" stroke-width="2.4"/><path d="M11 7L19.8 13.3L11 20Z" fill="#e8262b"/></svg>
<div class="r" style="left:35px;top:280.5px;width:23.5px;height:66.5px;border:2px solid #217346"></div>
<div class="r" style="left:37px;top:282.5px;width:19.5px;height:62.5px;border:1px solid #fff"></div>
<div class="r" style="left:54px;top:343px;width:6px;height:6px;background:#217346;border:1px solid #fff"></div>
<div class="t" style="left:90.30px;top:428.82px;font-size:21px;color:#000;font-weight:bold;transform:scaleX(0.9464);transform-origin:0 0;">Valor Presente Líquido</div>
<div class="r" style="left:71px;top:459px;width:399px;height:83px;background:#57ad40;border:1px solid #d9d9d9"></div>
<div class="t" style="left:270.50px;top:479.21px;font-size:47px;color:#fff;font-weight:bold;transform:scaleX(0.9949) translateX(-50%);transform-origin:0 0;">R$26.246</div>
<div class="t" style="left:90.30px;top:562.22px;font-size:21px;color:#000;font-weight:bold;transform:scaleX(0.9473);transform-origin:0 0;">Taxa Interna de Retorno (TIR)</div>
<div class="r" style="left:71px;top:593px;width:399px;height:83px;background:#57ad40;border:1px solid #d9d9d9"></div>
<div class="t" style="left:270.50px;top:612.41px;font-size:47px;color:#fff;font-weight:bold;transform:scaleX(0.9892) translateX(-50%);transform-origin:0 0;">22,29%</div>
<div class="t" style="left:90.30px;top:696.22px;font-size:21px;color:#000;font-weight:bold;transform:scaleX(0.9234);transform-origin:0 0;">Payback Descontado</div>
<div class="r" style="left:71px;top:728px;width:398.5px;height:82.5px;background:#f2f2f2;border:1px solid #d9d9d9"></div>
<div class="t" style="left:270.70px;top:752.38px;font-size:37px;color:#404040;font-weight:bold;transform:scaleX(0.9877) translateX(-50%);transform-origin:0 0;">33 meses</div>
<div class="t" style="left:90.30px;top:834.82px;font-size:21px;color:#000;font-weight:bold;transform:scaleX(0.9359);transform-origin:0 0;">Ponto de Equilíbrio</div>
<div class="r" style="left:71px;top:871px;width:398.5px;height:82.5px;background:#f2f2f2;border:1px solid #d9d9d9"></div>
<div class="t" style="left:270.50px;top:895.08px;font-size:37px;color:#404040;font-weight:bold;transform:scaleX(0.9796) translateX(-50%);transform-origin:0 0;">9 meses</div>
<div class="r" style="left:1894px;top:256px;width:26px;height:766px;background:#e6e6e6;"></div>
<div class="r" style="left:1894px;top:282px;width:2px;height:740px;background:#ababab;"></div>
<div class="r" style="left:1896px;top:357px;width:24px;height:665px;background:#dadada;"></div>
<div class="r" style="left:1898px;top:258.5px;width:18.5px;height:19px;background:#fff;border:1px solid #c6c6c6"></div>
<svg class="r" style="left:1902px;top:264px;" width="11" height="7" viewBox="0 0 11 7"><path d="M0 6.5H11L5.5 0.5Z" fill="#666"/></svg>
<div class="r" style="left:1898px;top:277.5px;width:18.5px;height:79px;background:#fff;border:1px solid #c6c6c6"></div>
<div class="r" style="left:1898px;top:1003px;width:18.5px;height:18.5px;background:#fff;border:1px solid #c6c6c6"></div>
<svg class="r" style="left:1902px;top:1009px;" width="11" height="7" viewBox="0 0 11 7"><path d="M0 0.5H11L5.5 6.5Z" fill="#666"/></svg>
<div class="r" style="left:0px;top:1022px;width:1920px;height:29px;background:#e6e6e6;"></div>
<div class="r" style="left:0px;top:1021.5px;width:1897px;height:1px;background:#bcbcbc;"></div>
<svg class="r" style="left:27px;top:1031px;" width="7" height="10" viewBox="0 0 7 10"><path d="M6.5 0.5V9.5L0.5 5Z" fill="#217346"/></svg>
<svg class="r" style="left:56px;top:1031px;" width="7" height="10" viewBox="0 0 7 10"><path d="M0.5 0.5V9.5L6.5 5Z" fill="#bdbdbd"/></svg>
<div class="r" style="left:81px;top:1036.5px;width:2.5px;height:2.5px;background:#217346;"></div>
<div class="r" style="left:86.5px;top:1036.5px;width:2.5px;height:2.5px;background:#217346;"></div>
<div class="r" style="left:92px;top:1036.5px;width:2.5px;height:2.5px;background:#217346;"></div>
<div class="r" style="left:103.5px;top:1026px;width:1px;height:21px;background:#a6a6a6;"></div>
<div class="r" style="left:169.8px;top:1026px;width:1px;height:21px;background:#a6a6a6;"></div>
<div class="r" style="left:235.4px;top:1026px;width:1px;height:21px;background:#a6a6a6;"></div>
<div class="r" style="left:301.7px;top:1026px;width:1px;height:21px;background:#a6a6a6;"></div>
<div class="r" style="left:345.4px;top:1026px;width:1px;height:21px;background:#a6a6a6;"></div>
<div class="r" style="left:437.8px;top:1026px;width:1px;height:21px;background:#a6a6a6;"></div>
<div class="r" style="left:525.3px;top:1026px;width:1px;height:21px;background:#a6a6a6;"></div>
<div class="r" style="left:586.3px;top:1026px;width:1px;height:21px;background:#a6a6a6;"></div>
<div class="r" style="left:667.5px;top:1026px;width:1px;height:21px;background:#a6a6a6;"></div>
<div class="r" style="left:973.75px;top:1026px;width:1px;height:21px;background:#a6a6a6;"></div>
<div class="r" style="left:1075.6px;top:1026px;width:1px;height:21px;background:#a6a6a6;"></div>
<div class="r" style="left:1175.6px;top:1026px;width:1px;height:21px;background:#a6a6a6;"></div>
<div class="r" style="left:1269.4px;top:1026px;width:1px;height:21px;background:#a6a6a6;"></div>
<div class="r" style="left:1316px;top:1026px;width:1px;height:21px;background:#a6a6a6;"></div>
<div class="r" style="left:1376.6px;top:1026px;width:1px;height:21px;background:#a6a6a6;"></div>
<div class="r" style="left:1434.4px;top:1026px;width:1px;height:21px;background:#a6a6a6;"></div>
<div class="r" style="left:1488.75px;top:1026px;width:1px;height:21px;background:#a6a6a6;"></div>
<div class="t" style="left:116.30px;top:1024.53px;font-size:16.5px;color:#444444;transform:scaleX(0.9944);transform-origin:0 0;">Ano1</div>
<div class="t" style="left:182.30px;top:1024.53px;font-size:16.5px;color:#444444;transform:scaleX(1.0126);transform-origin:0 0;">Ano2</div>
<div class="t" style="left:248.30px;top:1024.53px;font-size:16.5px;color:#444444;transform:scaleX(1.0178);transform-origin:0 0;">Ano3</div>
<div class="t" style="left:313.00px;top:1024.53px;font-size:16.5px;color:#444444;transform:scaleX(0.8500);transform-origin:0 0;">CF</div>
<div class="t" style="left:359.40px;top:1024.53px;font-size:16.5px;color:#444444;transform:scaleX(0.9421);transform-origin:0 0;">Rel_Viab</div>
<div class="t" style="left:450.30px;top:1024.53px;font-size:16.5px;color:#444444;transform:scaleX(0.9261);transform-origin:0 0;">Rel_Mês</div>
<div class="t" style="left:538.40px;top:1024.53px;font-size:16.5px;color:#444444;transform:scaleX(0.8776);transform-origin:0 0;">Rel_I</div>
<div class="t" style="left:598.00px;top:1024.53px;font-size:16.5px;color:#444444;transform:scaleX(0.9852);transform-origin:0 0;">Cen_Ot</div>
<div class="t" style="left:679.40px;top:1024.53px;font-size:16.5px;color:#444444;transform:scaleX(0.9118);transform-origin:0 0;">Cen_Pess</div>
<div class="t" style="left:881.60px;top:1024.53px;font-size:16.5px;color:#444444;transform:scaleX(0.9467);transform-origin:0 0;">Dash_Disp</div>
<div class="t" style="left:986.60px;top:1024.53px;font-size:16.5px;color:#444444;transform:scaleX(0.9658);transform-origin:0 0;">Dash_Proj</div>
<div class="t" style="left:1087.50px;top:1024.53px;font-size:16.5px;color:#444444;transform:scaleX(0.9506);transform-origin:0 0;">Dash_Cen</div>
<div class="t" style="left:1188.75px;top:1024.53px;font-size:16.5px;color:#444444;transform:scaleX(0.9291);transform-origin:0 0;">Dash_Fin</div>
<div class="t" style="left:1281.90px;top:1024.53px;font-size:16.5px;color:#444444;">INI</div>
<div class="t" style="left:1328.00px;top:1024.53px;font-size:16.5px;color:#444444;transform:scaleX(1.0045);transform-origin:0 0;">DUV</div>
<div class="t" style="left:1388.00px;top:1024.53px;font-size:16.5px;color:#444444;transform:scaleX(0.9231);transform-origin:0 0;">SUG</div>
<div class="t" style="left:1446.00px;top:1024.53px;font-size:16.5px;color:#444444;transform:scaleX(0.9496);transform-origin:0 0;">LUZ</div>
<div class="r" style="left:761px;top:1021.5px;width:107px;height:26px;background:#fff;border-left:1px solid #bcbcbc;border-right:1px solid #bcbcbc"></div>
<div class="r" style="left:761px;top:1045px;width:107px;height:2.5px;background:#217346;"></div>
<div class="t" style="left:773.75px;top:1024.53px;font-size:16.5px;color:#217346;font-weight:bold;transform:scaleX(0.9590);transform-origin:0 0;">Dash_Viab</div>
<svg class="r" style="left:1521px;top:1026px;" width="22" height="22" viewBox="0 0 22 22"><circle cx="11" cy="11" r="9.6" fill="none" stroke="#666" stroke-width="1.3"/><path d="M11 5.5V16.5M5.5 11H16.5" stroke="#666" stroke-width="1.6"/></svg>
<div class="r" style="left:1583px;top:1030.5px;width:2.5px;height:2.5px;background:#a6a6a6;"></div>
<div class="r" style="left:1583px;top:1035.5px;width:2.5px;height:2.5px;background:#a6a6a6;"></div>
<div class="r" style="left:1583px;top:1040.5px;width:2.5px;height:2.5px;background:#a6a6a6;"></div>
<div class="r" style="left:1601px;top:1027px;width:291px;height:19px;background:#dadada;"></div>
<div class="r" style="left:1601px;top:1027px;width:18.5px;height:18.5px;background:#fff;border:1px solid #c6c6c6"></div>
<svg class="r" style="left:1606px;top:1032px;" width="7" height="10" viewBox="0 0 7 10"><path d="M6.5 0V9L0.5 4.5Z" fill="#666"/></svg>
<div class="r" style="left:1620px;top:1027px;width:89.5px;height:18.5px;background:#fff;border:1px solid #c6c6c6"></div>
<div class="r" style="left:1873px;top:1027px;width:18.5px;height:18.5px;background:#fff;border:1px solid #c6c6c6"></div>
<svg class="r" style="left:1880px;top:1032px;" width="7" height="10" viewBox="0 0 7 10"><path d="M0.5 0V9L6.5 4.5Z" fill="#666"/></svg>
<div class="r" style="left:0px;top:1051px;width:1920px;height:27px;background:#f3f2f1;"></div>
<div class="r" style="left:0px;top:1050.5px;width:1920px;height:1px;background:#d4d4d4;"></div>
<svg class="r" style="left:10px;top:1057px;" width="19" height="17" viewBox="0 0 19 17"><path d="M0.75 0.75H17.25M0.75 3.25H17.25V8 M0.75 0.75V15.5H8" fill="none" stroke="#555" stroke-width="1.3"/><path d="M3 6H7M3 9H6M3 12H6" stroke="#555" stroke-width="1.2"/><circle cx="13" cy="12" r="4.3" fill="#fff" stroke="#555" stroke-width="1.4"/><circle cx="13" cy="12" r="1.8" fill="#555"/></svg>
<div class="r" style="left:1548px;top:1051px;width:50px;height:27px;background:#c8c6c4;"></div>
<svg class="r" style="left:1564px;top:1056px;" width="18" height="18" viewBox="0 0 18 18"><rect x="0.75" y="0.75" width="16" height="16" fill="#fff" stroke="#333" stroke-width="1.6"/><path d="M6 0.75V16.75M11.5 0.75V16.75M0.75 6H16.75M0.75 11.5H16.75" stroke="#333" stroke-width="1.6"/></svg>
<svg class="r" style="left:1614px;top:1056px;" width="18" height="18" viewBox="0 0 18 18"><rect x="0.75" y="0.75" width="16.5" height="16.5" fill="none" stroke="#555" stroke-width="1.5"/><rect x="4" y="3.5" width="10" height="11" fill="none" stroke="#555" stroke-width="1.2"/><path d="M6 6.5H12M6 9H12M6 11.5H12" stroke="#555" stroke-width="1.1"/></svg>
<svg class="r" style="left:1664px;top:1056px;" width="18" height="18" viewBox="0 0 18 18"><path d="M0.75 17.25V0.75H17.25V17.25Z M0.75 12H9V0.75" fill="none" stroke="#555" stroke-width="1.5"/></svg>
<div class="r" style="left:1705px;top:1064px;width:10px;height:1.2px;background:#555;"></div>
<div class="r" style="left:1721px;top:1064.5px;width:125px;height:1px;background:#a6a6a6;"></div>
<div class="r" style="left:1781px;top:1058px;width:6px;height:14px;background:#777;"></div>
<div class="r" style="left:1851.5px;top:1064px;width:10px;height:1.2px;background:#555;"></div>
<div class="r" style="left:1856px;top:1059px;width:1.2px;height:10px;background:#555;"></div>
<div class="t" style="left:1879.00px;top:1058.17px;font-size:13.5px;color:#666;transform:scaleX(0.8597);transform-origin:0 0;">100%</div>
<div class="r" style="left:0px;top:1078px;width:60px;height:2px;background:#1f1f1f;"></div>
<div class="r" style="left:60px;top:1078px;width:430px;height:2px;background:#9a9a9a;"></div>
<div class="r" style="left:490px;top:1078px;width:620px;height:2px;background:#1f1f1f;"></div>
<div class="r" style="left:1110px;top:1078px;width:62px;height:2px;background:#777;"></div>
<div class="r" style="left:1172px;top:1078px;width:748px;height:2px;background:#1f1f1f;"></div>
<div class="t" style="left:517.30px;top:428.82px;font-size:21px;color:#000;font-weight:bold;transform:scaleX(0.9203);transform-origin:0 0;">Análise do Fluxo de Caixa Econômico</div>
<div class="t" style="left:517.30px;top:696.62px;font-size:21px;color:#000;font-weight:bold;transform:scaleX(0.9434);transform-origin:0 0;">Análise de Retorno</div>
<svg class="r" style="left:0;top:0" width="1920" height="1080" viewBox="0 0 1920 1080"><rect x="504.5" y="462.5" width="1297" height="214" fill="#fff" stroke="#d9d9d9" stroke-width="1"/><path d="M521 596.5H1782" stroke="#d9d9d9" stroke-width="1"/><rect x="576" y="552" width="156" height="44" fill="#55ac3e"/><rect x="732" y="548" width="156" height="48" fill="#ef4630"/><rect x="997" y="525" width="155" height="71" fill="#55ac3e"/><rect x="1152" y="530" width="155" height="66" fill="#ef4630"/><rect x="1417" y="498" width="156" height="98" fill="#55ac3e"/><rect x="1573" y="516" width="156" height="80" fill="#ef4630"/><path d="M731.5 601L1152 591L1573 578.3" fill="none" stroke="#404040" stroke-width="2"/><rect x="979" y="647.5" width="31.5" height="8.5" fill="#55ac3e"/><rect x="1117" y="647.5" width="31.5" height="8.5" fill="#ef4630"/><path d="M1229 651.5H1262.5" stroke="#404040" stroke-width="2"/><rect x="504.5" y="730.5" width="1294" height="222" fill="#fff" stroke="#d9d9d9" stroke-width="1"/><path d="M521 807.5H1779.5" stroke="#d9d9d9" stroke-width="1"/><path d="M679 860C731.3 863.4 888.2 882.1 993 880.5C1097.8 878.9 1203.1 870.7 1308 850.5C1412.9 830.3 1570.1 774.5 1622.5 759.3" fill="none" stroke="#5b8fcb" stroke-width="3" stroke-linecap="round"/><path d="M1110 928.5H1144.5" stroke="#5b8fcb" stroke-width="3"/></svg>
<div class="t" style="left:731.90px;top:573.90px;font-size:13px;color:#000;transform:scaleX(1.0024) translateX(-50%);transform-origin:0 0;">-R$ 34.500</div>
<div class="t" style="left:1151.90px;top:564.00px;font-size:13px;color:#000;transform:scaleX(1.0031) translateX(-50%);transform-origin:0 0;">R$ 50.252</div>
<div class="t" style="left:1572.70px;top:551.90px;font-size:13px;color:#000;transform:scaleX(1.0007) translateX(-50%);transform-origin:0 0;">R$ 154.737</div>
<div class="t" style="left:731.90px;top:608.90px;font-size:13px;color:#595959;transform:scaleX(1.0299) translateX(-50%);transform-origin:0 0;">Ano 1</div>
<div class="t" style="left:1152.30px;top:608.90px;font-size:13px;color:#595959;transform:scaleX(1.0299) translateX(-50%);transform-origin:0 0;">Ano 2</div>
<div class="t" style="left:1572.50px;top:608.90px;font-size:13px;color:#595959;transform:scaleX(1.0299) translateX(-50%);transform-origin:0 0;">Ano 3</div>
<div class="t" style="left:1014.20px;top:645.00px;font-size:13px;color:#595959;transform:scaleX(1.0370);transform-origin:0 0;">Receita Bruta</div>
<div class="t" style="left:1152.40px;top:645.00px;font-size:13px;color:#595959;transform:scaleX(0.9788);transform-origin:0 0;">Despesas</div>
<div class="t" style="left:1265.30px;top:645.00px;font-size:13px;color:#595959;transform:scaleX(1.0275);transform-origin:0 0;">Lucro Livre</div>
<div class="t" style="left:679.20px;top:819.60px;font-size:13px;color:#595959;transform:scaleX(1.0446) translateX(-50%);transform-origin:0 0;">Ano 0</div>
<div class="t" style="left:993.60px;top:819.60px;font-size:13px;color:#595959;transform:scaleX(1.0446) translateX(-50%);transform-origin:0 0;">Ano 1</div>
<div class="t" style="left:1307.90px;top:819.60px;font-size:13px;color:#595959;transform:scaleX(1.0446) translateX(-50%);transform-origin:0 0;">Ano 2</div>
<div class="t" style="left:1622.80px;top:819.60px;font-size:13px;color:#595959;transform:scaleX(1.0446) translateX(-50%);transform-origin:0 0;">Ano 3</div>
<div class="t" style="left:679.20px;top:833.80px;font-size:13px;color:#404040;transform:scaleX(1.0278) translateX(-50%);transform-origin:0 0;">-R$90.000,00</div>
<div class="t" style="left:993.40px;top:853.80px;font-size:13px;color:#404040;transform:scaleX(1.0262) translateX(-50%);transform-origin:0 0;">-R$124.500,00</div>
<div class="t" style="left:1308.30px;top:824.90px;font-size:13px;color:#404040;transform:scaleX(1.0227) translateX(-50%);transform-origin:0 0;">-R$74.248,24</div>
<div class="t" style="left:1622.70px;top:734.80px;font-size:13px;color:#404040;transform:scaleX(1.0203) translateX(-50%);transform-origin:0 0;">R$80.488,37</div>
<div class="t" style="left:1147.00px;top:921.60px;font-size:13px;color:#595959;transform:scaleX(0.9825);transform-origin:0 0;">Payback</div>
</body></html>
